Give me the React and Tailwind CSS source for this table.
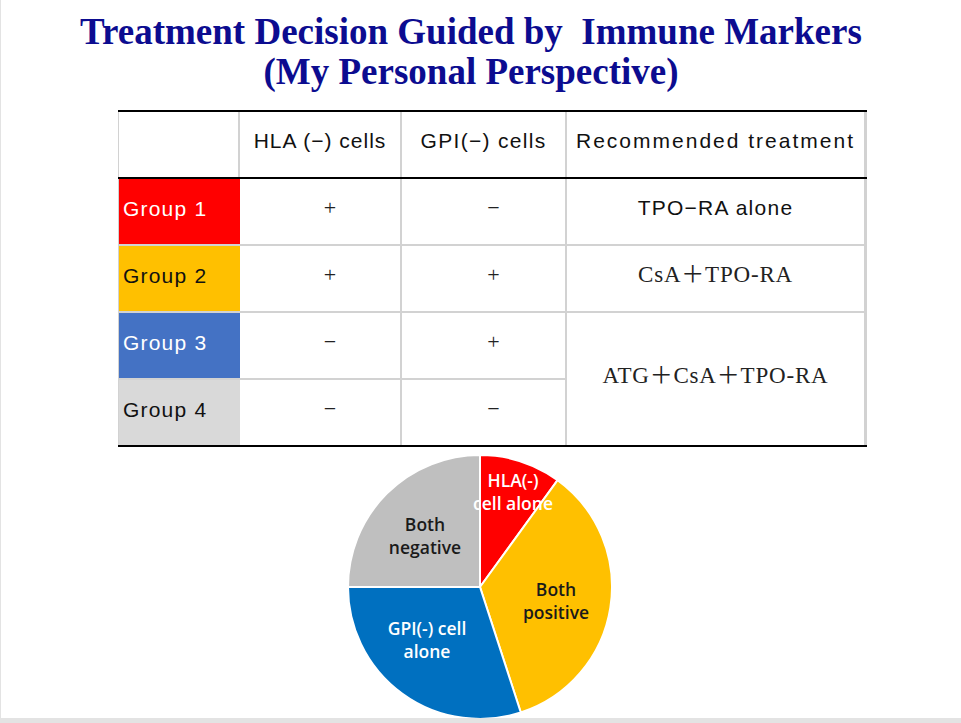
export default function App() {
  const sym = "flex items-center justify-center pl-[20px] pb-[8px] bg-white text-[22px] text-[#222] font-['Liberation_Serif',serif]";
  const grp = "mr-[-2px] flex items-center pl-[4px] pb-[6px] text-[21px] tracking-[1.2px] font-['Liberation_Sans',sans-serif] whitespace-nowrap";
  const head = "bg-white flex items-center justify-center pb-[8px] whitespace-nowrap";
  const mincho = "bg-white flex items-center justify-center pb-[6px] text-[23px] text-[#222] tracking-[0.8px] font-['Liberation_Serif','Noto_Sans_CJK_JP',serif] whitespace-nowrap";
  return (
    <div className="w-[961px] h-[723px] bg-[#e3e3e3] overflow-hidden">
      <div className="ml-[1px] w-[960px] h-[718px] bg-white overflow-hidden flex flex-col">
        <div className="pt-[12px] pr-[20px] text-center font-bold text-[37px] leading-[40px] text-[#0c0c90] font-['Liberation_Serif',serif]">
          <div>Treatment Decision Guided by&nbsp; Immune Markers</div>
          <div>(My Personal Perspective)</div>
        </div>

        <div className="ml-[117px] mt-[18px] w-[749px] border-t-2 border-black">
          <div className="grid grid-cols-[119px_160px_163px_297px] gap-x-[2px] bg-[#d2d2d2] pl-[1px] pr-[2px] h-[65px] text-[21px] text-[#111] font-['Liberation_Sans',sans-serif]">
            <div className="bg-white" />
            <div className={`${head} tracking-[1px]`}>HLA (−) cells</div>
            <div className={`${head} tracking-[1.3px]`}>GPI(−) cells</div>
            <div className={`${head} tracking-[2px]`}>Recommended treatment</div>
          </div>
          <div className="h-[2px] bg-black" />
          <div className="grid grid-cols-[119px_160px_163px_297px] grid-rows-[65px_65px_65px_65px] gap-[2px] bg-[#d2d2d2] pl-[1px] pr-[2px]">
            <div className={`${grp} bg-[#ff0000] text-white`}>Group 1</div>
            <div className={sym}>+</div>
            <div className={sym}>−</div>
            <div className="bg-white flex items-center justify-center pb-[8px] text-[21px] text-[#111] tracking-[1.25px] font-['Liberation_Sans',sans-serif] whitespace-nowrap">TPO−RA alone</div>

            <div className={`${grp} bg-[#ffc000] text-[#111]`}>Group 2</div>
            <div className={sym}>+</div>
            <div className={sym}>+</div>
            <div className={mincho}>CsA＋TPO-RA</div>

            <div className={`${grp} bg-[#4472c4] text-white`}>Group 3</div>
            <div className={sym}>−</div>
            <div className={sym}>+</div>
            <div className={`${mincho} row-span-2`}>ATG＋CsA＋TPO-RA</div>

            <div className={`${grp} bg-[#d9d9d9] text-[#111]`}>Group 4</div>
            <div className={sym}>−</div>
            <div className={sym}>−</div>
          </div>
          <div className="h-[2px] bg-black" />
        </div>

        <div className="mt-[8px] ml-[347px] w-[264px] h-[264px]">
          <svg width="264" height="264" viewBox="0 0 264 264">
            <g stroke="#ffffff" strokeWidth="2" strokeLinejoin="round">
              <path d="M132,132 L132,0 A132,132 0 0 1 209.6,25.2 Z" fill="#ff0000" />
              <path d="M132,132 L209.6,25.2 A132,132 0 0 1 172.8,257.5 Z" fill="#ffc000" />
              <path d="M132,132 L172.8,257.5 A132,132 0 0 1 0,132 Z" fill="#0070c0" />
              <path d="M132,132 L0,132 A132,132 0 0 1 132,0 Z" fill="#bfbfbf" />
            </g>
            <g fontSize="17.5" fontWeight="600" textAnchor="middle" className="font-['Open_Sans','Noto_Sans',sans-serif]">
              <text x="165" y="32" fill="#ffffff">HLA(-)</text>
              <text x="165" y="55" fill="#ffffff">cell alone</text>
              <text x="77" y="76" fill="#1a1a1a">Both</text>
              <text x="77" y="99" fill="#1a1a1a">negative</text>
              <text x="208" y="141" fill="#1a1a1a">Both</text>
              <text x="208" y="164" fill="#1a1a1a">positive</text>
              <text x="79" y="180" fill="#ffffff">GPI(-) cell</text>
              <text x="79" y="203" fill="#ffffff">alone</text>
            </g>
          </svg>
        </div>
      </div>
    </div>
  );
}
